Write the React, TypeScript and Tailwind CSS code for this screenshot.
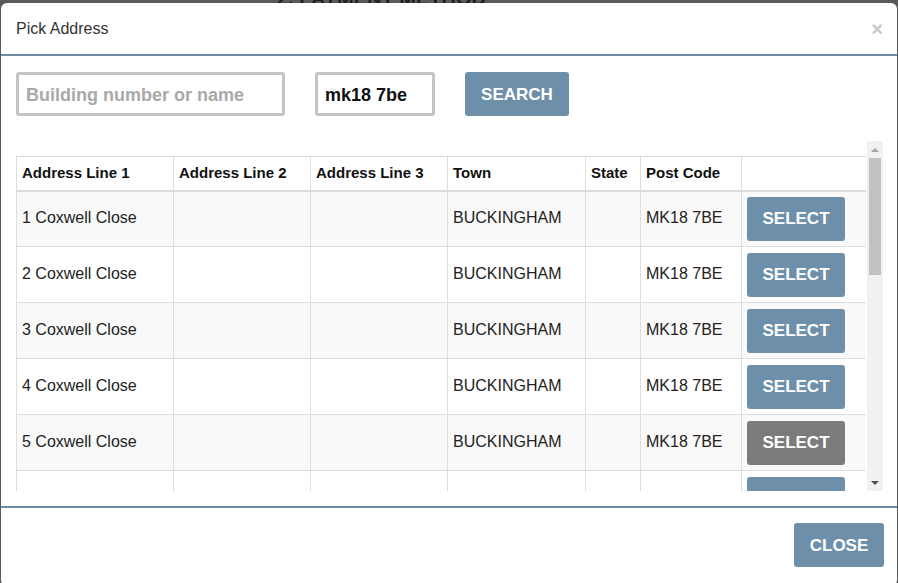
import React from "react";

const rows = [1, 2, 3, 4, 5, 6];

export default function App() {
  return (
    <div
      className="relative w-[898px] h-[583px] overflow-hidden bg-[#5a5a5a]"
      style={{ fontFamily: '"Liberation Sans", Arial, sans-serif' }}
    >
      <div className="absolute left-[277px] top-[-12px] text-[20px] leading-[20px] font-bold text-[#202020] whitespace-nowrap">
        2. PAYMENT METHOD
      </div>
      <div className="relative ml-[1px] mt-[3px] w-[896px] h-[583px] rounded-[6px] bg-white flex flex-col">
        {/* header */}
        <div className="h-[53px] border-b-2 border-[#6b8ba6] flex items-center justify-between pl-[15px] pr-[14px]">
          <span className="text-[16px] text-[#333]">Pick Address</span>
          <span className="text-[20px] font-bold leading-none text-[#c8c8c8] mt-[1px]">×</span>
        </div>
        {/* body */}
        <div className="pl-[15px] pr-[14px] pt-[16px] pb-[15px] h-[450px] flex flex-col">
          <div className="flex items-center h-[44px]">
            <div className="w-[269px] h-[44px] border-[3px] border-[#c4c4c4] rounded-[3px] flex items-center pl-[7px] pt-[3px] text-[18px] font-bold text-[#a9a9a9] whitespace-nowrap">
              Building number or name
            </div>
            <div className="ml-[30px] w-[120px] h-[44px] border-[3px] border-[#c4c4c4] rounded-[3px] flex items-center pl-[7px] pt-[3px] text-[18px] font-bold text-[#111]">
              mk18 7be
            </div>
            <div className="ml-[30px] w-[104px] h-[44px] rounded-[3px] bg-[#6d8faa] flex items-center justify-center pt-[2px] text-[17px] font-bold text-white">
              SEARCH
            </div>
          </div>
          <div className="mt-[25px] h-[350px] flex overflow-hidden">
            <div className="w-[850px] h-[350px] overflow-hidden pt-[15px]">
              <table className="table-fixed border-collapse w-[850px] text-[#222]">
                <colgroup>
                  <col className="w-[157px]" />
                  <col className="w-[137px]" />
                  <col className="w-[137px]" />
                  <col className="w-[138px]" />
                  <col className="w-[55px]" />
                  <col className="w-[101px]" />
                  <col className="w-[125px]" />
                </colgroup>
                <thead>
                  <tr className="h-[34px]">
                    {["Address Line 1", "Address Line 2", "Address Line 3", "Town", "State", "Post Code", ""].map((h, i) => (
                      <th
                        key={i}
                        className="border border-[#dddddd] border-b-2 px-[5px] pt-0 pb-[1px] text-left text-[15px] font-bold text-[#111] whitespace-nowrap align-middle"
                      >
                        {h}
                      </th>
                    ))}
                  </tr>
                </thead>
                <tbody>
                  {rows.map((n) => (
                    <tr key={n} className={n % 2 === 1 ? "bg-[#f9f9f9] h-[56px]" : "bg-white h-[56px]"}>
                      <td className="border border-[#dddddd] px-[5px] pb-[1px] text-[16px] align-middle whitespace-nowrap">
                        {n < 6 ? `${n} Coxwell Close` : ""}
                      </td>
                      <td className="border border-[#dddddd] px-[5px]"></td>
                      <td className="border border-[#dddddd] px-[5px]"></td>
                      <td className="border border-[#dddddd] px-[5px] pb-[1px] text-[16px] align-middle whitespace-nowrap">
                        {n < 6 ? "BUCKINGHAM" : ""}
                      </td>
                      <td className="border border-[#dddddd] px-[5px]"></td>
                      <td className="border border-[#dddddd] px-[5px] pb-[1px] text-[16px] align-middle whitespace-nowrap">
                        {n < 6 ? "MK18 7BE" : ""}
                      </td>
                      <td className="border border-[#dddddd] px-[5px] align-middle">
                        <div
                          className={
                            n === 5
                              ? "w-[98px] h-[44px] rounded-[3px] bg-[#7b7b7b] flex items-center justify-center text-[17px] font-bold text-white"
                              : "w-[98px] h-[44px] rounded-[3px] bg-[#6d8faa] flex items-center justify-center text-[17px] font-bold text-white"
                          }
                        >
                          SELECT
                        </div>
                      </td>
                    </tr>
                  ))}
                </tbody>
              </table>
            </div>
            {/* fake scrollbar */}
            <div className="ml-[1px] w-[16px] h-[350px] bg-[#f1f1f1] flex flex-col items-center">
              <div className="h-[17px] w-full flex items-center justify-center">
                <div className="w-0 h-0 border-l-[4px] border-r-[4px] border-b-[4px] border-l-transparent border-r-transparent border-b-[#a3a3a3]" />
              </div>
              <div className="w-[12px] h-[117px] bg-[#c1c1c1]" />
              <div className="flex-1" />
              <div className="h-[17px] w-full flex items-center justify-center">
                <div className="w-0 h-0 border-l-[4px] border-r-[4px] border-t-[4px] border-l-transparent border-r-transparent border-t-[#505050]" />
              </div>
            </div>
          </div>
        </div>
        {/* footer */}
        <div className="border-t-2 border-[#6b8ba6] flex justify-end pt-[15px] pr-[13px]">
          <div className="w-[90px] h-[44px] rounded-[3px] bg-[#6d8faa] flex items-center justify-center pt-[2px] text-[17px] font-bold text-white">
            CLOSE
          </div>
        </div>
      </div>
    </div>
  );
}
